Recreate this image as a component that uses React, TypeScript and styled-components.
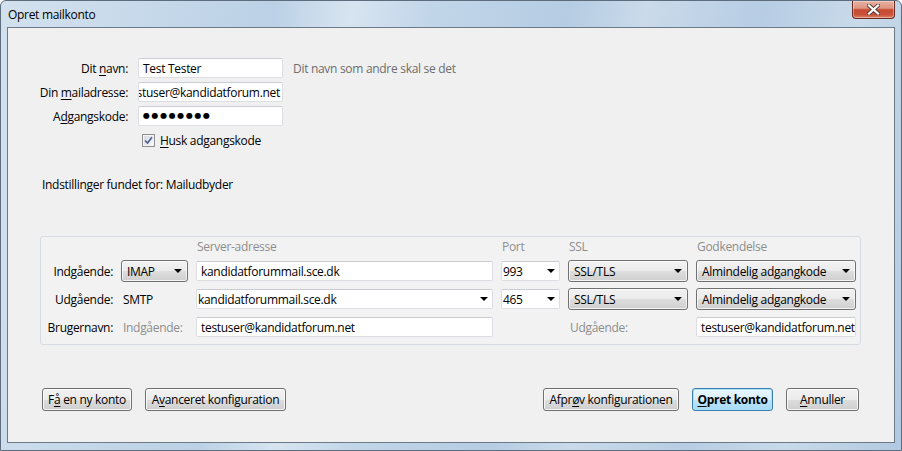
import React from 'react';
import styled, { createGlobalStyle, css } from 'styled-components';

const Global = createGlobalStyle`
  html, body { margin: 0; padding: 0; background: #ffffff; }
  body {
    font-family: "Open Sans", "Noto Sans", "DejaVu Sans", sans-serif;
    font-size: 12px;
    letter-spacing: -0.3px;
    color: #000;
  }
  * { box-sizing: border-box; }
`;

const Frame = styled.div`
  width: 902px;
  height: 451px;
  display: flex;
  flex-direction: column;
  border: 1px solid #5d6d7d;
  border-radius: 6px 6px 0 0;
  padding: 0 6px 7px 6px;
  background:
    linear-gradient(100deg,
      #d3e1ee 0%, #c4d7e9 18%, #bcd1e6 28%, #d7e4f0 36%, #c2d6e9 44%,
      #b5cce3 58%, #cadaea 66%, #b7cde4 78%, #c9dae9 88%, #b1c9e1 100%);
`;

const TitleBar = styled.div`
  height: 26px;
  display: flex;
  align-items: center;
  padding-left: 1px;
`;

const TitleText = styled.span`
  font-size: 12px;
  color: #000;
`;

const CloseButton = styled.div`
  margin-left: auto;
  align-self: flex-start;
  width: 43px;
  height: 18px;
  display: flex;
  align-items: center;
  justify-content: center;
  border: 1px solid #6a2c22;
  border-top: none;
  border-radius: 0 0 4px 4px;
  background: linear-gradient(#e7b1a2 0%, #dd9583 42%, #c64a30 52%, #c9523a 80%, #dd8469 100%);
  box-shadow: inset 0 0 0 1px rgba(255, 255, 255, 0.35);
`;

const Client = styled.div`
  flex: 1;
  display: flex;
  flex-direction: column;
  background: #f0f0f0;
  border: 1px solid #6c7a88;
  padding: 30px 33px 31px 32px;
`;

const TopForm = styled.div`
  display: grid;
  grid-template-columns: 89px 145px 1fr;
  grid-auto-rows: 20px;
  column-gap: 9px;
  row-gap: 4px;
  align-items: center;
`;

const FieldLabel = styled.label`
  justify-self: end;
  padding-right: 1px;
  white-space: nowrap;
`;

const Key = styled.span`
  text-decoration: underline;
  text-underline-offset: 2px;
`;

const TextBox = styled.div<{ $alignEnd?: boolean }>`
  height: 20px;
  display: flex;
  align-items: center;
  justify-content: ${(p) => (p.$alignEnd ? 'flex-end' : 'flex-start')};
  overflow: hidden;
  white-space: nowrap;
  background: #ffffff;
  border: 1px solid #dcdee3;
  border-top-color: #c9ccd2;
  border-radius: 2px;
  padding: 0 2px 0 4px;
`;

const PasswordDots = styled.span`
  font-family: "DejaVu Sans", sans-serif;
  font-size: 8px;
  letter-spacing: 1.6px;
  line-height: 1;
`;

const Hint = styled.span`
  color: #6d6d6d;
  margin-left: 1px;
  white-space: nowrap;
`;

const CheckRow = styled.div`
  grid-column: 2 / 4;
  display: flex;
  align-items: center;
  gap: 5px;
  padding-left: 4px;
`;

const CheckBox = styled.div`
  width: 13px;
  height: 13px;
  border: 1px solid #8e8f8f;
  background: #f4f4f4;
  padding: 1px;
  display: flex;
`;

const CheckInner = styled.div`
  flex: 1;
  background: linear-gradient(135deg, #d6d9e0, #f6f7f9);
  display: flex;
  align-items: center;
  justify-content: center;
`;

const FoundText = styled.div`
  margin-top: 27px;
  line-height: 16px;
  padding-left: 2px;
`;

const ServerBox = styled.div`
  margin-top: 43px;
  border: 1px solid #d5dbe0;
  border-radius: 3px;
  background: #f2f2f2;
  padding: 2px 4px 6px 7px;
  display: grid;
  grid-template-columns: 65px 67px 297px 59px 120px 160px;
  grid-template-rows: 15px 22px 22px 22px;
  column-gap: 8px;
  row-gap: 6px;
  align-items: center;
`;

const ColHead = styled.div<{ $col: number }>`
  grid-column: ${(p) => p.$col};
  color: #8d8d8d;
  padding-left: 1px;
  line-height: 15px;
  white-space: nowrap;
`;

const RowLabel = styled.div`
  justify-self: end;
  white-space: nowrap;
`;

const PlainValue = styled.div<{ $muted?: boolean }>`
  padding-left: 2px;
  color: ${(p) => (p.$muted ? '#8d8d8d' : '#000')};
  white-space: nowrap;
`;

const Arrow = styled.span`
  width: 0;
  height: 0;
  border-left: 4px solid transparent;
  border-right: 4px solid transparent;
  border-top: 4px solid #000;
  flex: none;
`;

const DropButton = styled.div`
  height: 22px;
  display: flex;
  align-items: center;
  justify-content: space-between;
  padding: 0 5px 0 5px;
  border: 1px solid #707070;
  border-radius: 3px;
  background: linear-gradient(#f2f2f2 0%, #ebebeb 50%, #dddddd 51%, #cfcfcf 100%);
  box-shadow: inset 0 0 0 1px rgba(255, 255, 255, 0.75);
  white-space: nowrap;
`;

const Combo = styled.div`
  height: 20px;
  display: flex;
  align-items: center;
  justify-content: space-between;
  padding: 0 4px 0 1px;
  background: #ffffff;
  border: 1px solid #dcdee3;
  border-top-color: #c9ccd2;
  border-radius: 2px;
  white-space: nowrap;
`;

const Footer = styled.div`
  margin-top: auto;
  display: flex;
  align-items: center;
  gap: 13px;
  padding: 0 2px;
`;

const Spacer = styled.div`
  flex: 1;
`;

const Button = styled.div<{ $w: number; $default?: boolean }>`
  width: ${(p) => p.$w}px;
  height: 23px;
  display: flex;
  align-items: center;
  justify-content: center;
  white-space: nowrap;
  border: 1px solid #707070;
  border-radius: 3px;
  background: linear-gradient(#f2f2f2 0%, #ebebeb 50%, #dddddd 51%, #cfcfcf 100%);
  box-shadow: inset 0 0 0 1px rgba(255, 255, 255, 0.8);
  ${(p) =>
    p.$default &&
    css`
      border-color: #3c7fb1;
      font-weight: 700;
      background: linear-gradient(#eaf6fd 0%, #d9f0fc 50%, #bee6fd 51%, #a7d9f5 100%);
      box-shadow: inset 0 0 0 1px #a9e1f6;
    `}
`;

export default function App() {
  return (
    <>
      <Global />
      <Frame>
        <TitleBar>
          <TitleText>Opret mailkonto</TitleText>
          <CloseButton>
            <svg width="13" height="11" viewBox="0 0 13 11">
              <path d="M2 1.5 L11 9.5 M11 1.5 L2 9.5" stroke="#5a3a36" strokeWidth="4" strokeLinecap="square" />
              <path d="M2 1.5 L11 9.5 M11 1.5 L2 9.5" stroke="#ffffff" strokeWidth="2.2" strokeLinecap="square" />
            </svg>
          </CloseButton>
        </TitleBar>
        <Client>
          <TopForm>
            <FieldLabel>
              Dit <Key>n</Key>avn:
            </FieldLabel>
            <TextBox>Test Tester</TextBox>
            <Hint>Dit navn som andre skal se det</Hint>

            <FieldLabel>
              Din <Key>m</Key>ailadresse:
            </FieldLabel>
            <TextBox $alignEnd>testuser@kandidatforum.net</TextBox>
            <span />

            <FieldLabel>
              A<Key>d</Key>gangskode:
            </FieldLabel>
            <TextBox>
              <PasswordDots>●●●●●●●●</PasswordDots>
            </TextBox>
            <span />

            <span />
            <CheckRow>
              <CheckBox>
                <CheckInner>
                  <svg width="9" height="9" viewBox="0 0 9 9">
                    <path d="M1 4.5 L3.5 7 L8 1.2" fill="none" stroke="#4b5d8e" strokeWidth="1.6" />
                  </svg>
                </CheckInner>
              </CheckBox>
              <span>
                <Key>H</Key>usk adgangskode
              </span>
            </CheckRow>
          </TopForm>

          <FoundText>Indstillinger fundet for: Mailudbyder</FoundText>

          <ServerBox>
            <ColHead $col={3}>Server-adresse</ColHead>
            <ColHead $col={4}>Port</ColHead>
            <ColHead $col={5}>SSL</ColHead>
            <ColHead $col={6}>Godkendelse</ColHead>

            <RowLabel>Indgående:</RowLabel>
            <DropButton>
              <span>IMAP</span>
              <Arrow />
            </DropButton>
            <TextBox>kandidatforummail.sce.dk</TextBox>
            <Combo>
              <span>993</span>
              <Arrow />
            </Combo>
            <DropButton>
              <span>SSL/TLS</span>
              <Arrow />
            </DropButton>
            <DropButton>
              <span>Almindelig adgangkode</span>
              <Arrow />
            </DropButton>

            <RowLabel>Udgående:</RowLabel>
            <PlainValue>SMTP</PlainValue>
            <Combo>
              <span>kandidatforummail.sce.dk</span>
              <Arrow />
            </Combo>
            <Combo>
              <span>465</span>
              <Arrow />
            </Combo>
            <DropButton>
              <span>SSL/TLS</span>
              <Arrow />
            </DropButton>
            <DropButton>
              <span>Almindelig adgangkode</span>
              <Arrow />
            </DropButton>

            <RowLabel>Brugernavn:</RowLabel>
            <PlainValue $muted>Indgående:</PlainValue>
            <TextBox>testuser@kandidatforum.net</TextBox>
            <span />
            <PlainValue $muted>Udgående:</PlainValue>
            <TextBox>testuser@kandidatforum.net</TextBox>
          </ServerBox>

          <Footer>
            <Button $w={90}>
              F<Key>å</Key>&nbsp;en ny konto
            </Button>
            <Button $w={141}>
              A<Key>v</Key>anceret konfiguration
            </Button>
            <Spacer />
            <Button $w={136}>
              Afpr<Key>ø</Key>v konfigurationen
            </Button>
            <Button $w={81} $default>
              <Key>O</Key>pret konto
            </Button>
            <Button $w={73}>
              <Key>A</Key>nnuller
            </Button>
          </Footer>
        </Client>
      </Frame>
    </>
  );
}
